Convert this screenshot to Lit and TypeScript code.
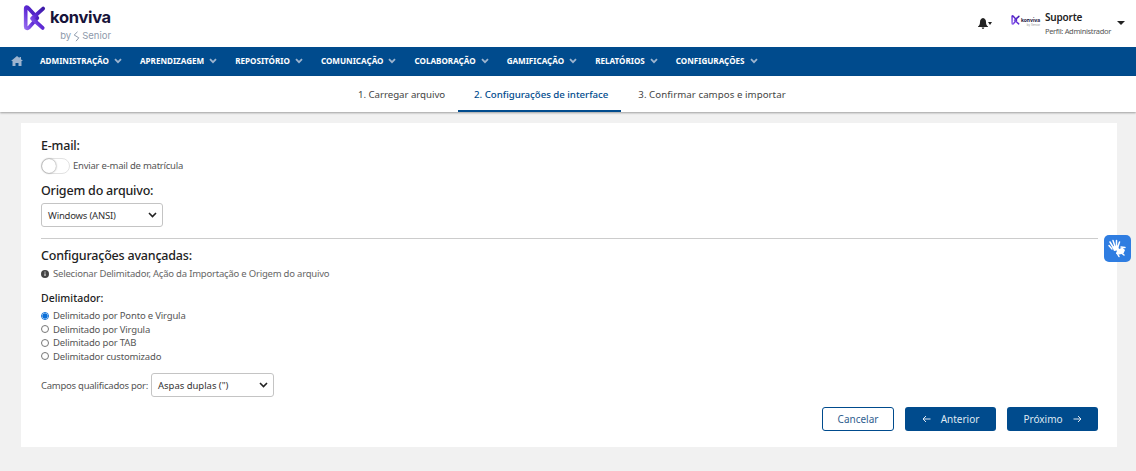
import { LitElement, html, css, svg } from "lit";
import { customElement } from "lit/decorators.js";

const chev = svg`<svg class="chev" width="8" height="6" viewBox="0 0 8 6"><path d="M1 1.200 4 4.200 7 1.200" fill="none" stroke="#9db4cf" stroke-width="1.800"/></svg>`;
const logoMark = (w: number, h: number, id: string) => html`<svg width=${w} height=${h} viewBox="0 0 24 26">
  <defs><linearGradient id=${id} x1="0" y1="1" x2="1" y2="0"><stop offset="0" stop-color="#9468ee"/><stop offset=".45" stop-color="#5f2bd6"/><stop offset="1" stop-color="#3d1aa8"/></linearGradient></defs>
  <path d="M2.800 3V21.800C2.800 24 4.800 24.400 6.200 23L15 13 6 3C4.500 1.300 2.800 1.300 2.800 3Z" fill="none" stroke=${`url(#${id})`} stroke-width="3.800" stroke-linejoin="round"/>
  <path d="M21 3.200 9.500 13.500 20.500 23.300" fill="none" stroke=${`url(#${id})`} stroke-width="4" stroke-linecap="round" stroke-linejoin="round"/></svg>`;

@customElement("app-root")
export class AppRoot extends LitElement {
  static styles = css`
    :host { display: block; width: 1136px; height: 471px; overflow: hidden; position: relative; background: #f1f1f1; font-family: "Noto Sans", "Open Sans", sans-serif; color: #333; }
    .top { height: 47px; background: #fff; display: flex; align-items: flex-start; justify-content: space-between; }
    .logo { margin: 5px 0 0 23px; display: grid; grid-template-columns: 23px auto; column-gap: 4px; width: 90px; }
    .logo .word { font: 700 16.500px/17px "Inter", sans-serif; color: #17133a; letter-spacing: -0.3px; margin-top: 4px; }
    .logo .by { grid-column: 1 / 3; justify-self: end; margin: -1px 2px 0 0; font: 400 9.500px/12px "Inter", sans-serif; color: #8e9aab; display: flex; align-items: center; gap: 2px; }
    .user { display: flex; align-items: flex-start; margin-right: 11px; }
    .bell { margin: 18px 0 0 0; display: flex; align-items: center; }
    .mini { margin: 15px 0 0 19px; width: 28px; display: grid; grid-template-columns: 9px auto; column-gap: 1px; align-items: center; }
    .mini b { font: 700 5px/6px "Inter", sans-serif; color: #17133a; }
    .mini i { grid-column: 1 / 3; justify-self: end; font: 400 3px/3px "Inter", sans-serif; color: #999; margin-top: -1px; }
    .who { margin: 11px 0 0 6px; width: 72px; }
    .who .n { font-size: 10px; font-weight: 600; line-height: 13px; color: #222; letter-spacing: -.2px; }
    .who .p { font-size: 7.500px; line-height: 11px; color: #555; margin-top: 2px; white-space: nowrap; letter-spacing: -.33px; }
    .caret { width: 0; height: 0; border: 4px solid transparent; border-top: 4px solid #222; border-bottom: 0; margin: 21px 0 0 0; }
    .bcaret { width: 0; height: 0; border: 2.500px solid transparent; border-top: 3px solid #222; border-bottom: 0; }
    nav { height: 29px; background: #004b8d; display: flex; align-items: center; padding: 0 0 2px 11px; box-sizing: border-box; }
    nav .home { margin-right: 17px; display: flex; }
    nav .m { display: flex; align-items: center; gap: 5px; margin-right: 18px; color: #fff; font-size: 8.100px; font-weight: 700; white-space: nowrap; }
    .tabs { height: 36px; background: #fff; display: flex; padding-left: 345px; box-shadow: 0 1px 2px rgba(0,0,0,.35); position: relative; box-sizing: border-box; }
    .tab { font-size: 9.700px; line-height: 37px; color: #444; letter-spacing: -.04px; box-sizing: border-box; white-space: nowrap; }
    .t1 { padding: 0 13px; }
    .t2 { padding: 0 13px 0 16px; color: #004b8d; font-weight: 500; border-bottom: 2px solid #004b8d; }
    .t3 { padding: 0 0 0 17px; letter-spacing: .05px; }
    .card { position: absolute; left: 21px; top: 123px; width: 1096px; height: 324px; background: #fff; box-sizing: border-box; padding: 14px 19px 0 20px; }
    h3 { margin: 0; font-size: 12.500px; font-weight: 500; line-height: 17px; color: #222; letter-spacing: -.2px; }
    .sw { display: flex; align-items: center; gap: 3px; margin-top: 3px; height: 17px; font-size: 9.500px; color: #555; letter-spacing: -.23px; }
    .switch { width: 29px; height: 16px; border: 1px solid #e2e2e2; border-radius: 9px; box-sizing: border-box; position: relative; background: #fff; }
    .switch::before { content: ""; position: absolute; left: 0; top: 0; width: 14px; height: 14px; border-radius: 50%; background: #fff; box-shadow: 0 0 2px rgba(0,0,0,.6); }
    .org { margin-top: 8px; }
    .sel { appearance: none; display: flex; align-items: center; justify-content: space-between; box-sizing: border-box; height: 24px; border: 1px solid #c4c4c4; border-radius: 3px; padding: 0 5px 0 6px; font-size: 9.500px; color: #333; background: #fff; }
    .s1 { width: 122px; margin-top: 4px; letter-spacing: -.2px; }
    hr { border: 0; border-top: 1px solid #ccc; margin: 11px 0 0; height: 0; }
    .adv { margin-top: 8px; }
    .info { display: flex; align-items: center; gap: 4px; margin-top: 3px; font-size: 9.500px; line-height: 14px; color: #666; letter-spacing: -.21px; }
    .del { margin-top: 10px; font-size: 10.500px; font-weight: 500; line-height: 14px; color: #222; }
    .radios { margin-top: 4px; display: flex; flex-direction: column; }
    .r { display: flex; align-items: center; gap: 4px; height: 13.500px; font-size: 9.500px; color: #555; letter-spacing: -.17px; }
    .dot { width: 8px; height: 8px; border: 1px solid #777; border-radius: 50%; box-sizing: border-box; background: #fff; }
    .dot.on { border: 1px solid #0a6fd8; background: radial-gradient(circle, #0a6fd8 0 2.400px, #fff 2.800px); }
    .q { display: flex; align-items: center; gap: 3px; margin-top: 10px; font-size: 9.500px; color: #555; letter-spacing: -.25px; }
    .s2 { width: 123px; letter-spacing: -.03px; }
    .actions { display: flex; justify-content: flex-end; gap: 11px; margin-top: 10px; }
    .btn { height: 24px; box-sizing: border-box; border-radius: 3px; display: flex; align-items: center; justify-content: center; font-size: 10px; }
    .c { width: 72px; border: 1px solid #004b8d; color: #31608f; background: #fff; }
    .a, .b { width: 91px; background: #004b8d; color: #dfe8f2; gap: 10px; }
    .vlib { position: absolute; right: 5px; top: 235px; width: 27px; height: 27px; border-radius: 5px; background: #2f7de1; display: flex; align-items: center; justify-content: center; }
  `;

  menu = ["ADMINISTRAÇÃO", "APRENDIZAGEM", "REPOSITÓRIO", "COMUNICAÇÃO", "COLABORAÇÃO", "GAMIFICAÇÃO", "RELATÓRIOS", "CONFIGURAÇÕES"];
  radios = ["Delimitado por Ponto e Virgula", "Delimitado por Virgula", "Delimitado por TAB", "Delimitador customizado"];

  selChev() {
    return html`<svg width="9" height="6" viewBox="0 0 9 6"><path d="M1 1 4.500 4.500 8 1" fill="none" stroke="#222" stroke-width="1.600"/></svg>`;
  }

  render() {
    return html`
      <div class="top">
        <div class="logo">
          ${logoMark(23, 26, "lg1")}
          <div class="word">konviva</div>
          <div class="by">by
            <svg width="7" height="11" viewBox="0 0 7 11"><path d="M4.500 .8 1.200 4 5.800 6.800 3 10.200" fill="none" stroke="#8e9aab" stroke-width="1"/></svg>
            Senior</div>
        </div>
        <div class="user">
          <div class="bell">
            <svg width="10" height="11" viewBox="0 0 10 11"><path d="M5 0C3 .5 2 2 2 4c0 2-.6 3.500-2 4.600V9h10v-.4C8.600 7.500 8 6 8 4c0-2-1-3.500-3-4ZM3.700 9.600a1.300 1.300 0 0 0 2.600 0Z" fill="#222"/></svg>
            <span class="bcaret"></span>
          </div>
          <div class="mini">${logoMark(9, 10, "lg2")}<b>konviva</b><i>by Senior</i></div>
          <div class="who"><div class="n">Suporte</div><div class="p">Perfil: Administrador</div></div>
          <span class="caret"></span>
        </div>
      </div>
      <nav>
        <span class="home"><svg width="12" height="10" viewBox="0 0 12 10"><path d="M6 0 0 5h1.500v5h3V7h3v3h3V5H12L10 3.300V1H8.500v1Z" fill="#9db4cf"/></svg></span>
        ${this.menu.map((m) => html`<span class="m">${m}${chev}</span>`)}
      </nav>
      <div class="tabs">
        <div class="tab t1">1. Carregar arquivo</div>
        <div class="tab t2">2. Configurações de interface</div>
        <div class="tab t3">3. Confirmar campos e importar</div>
      </div>
      <div class="card">
        <h3>E-mail:</h3>
        <div class="sw"><span class="switch"></span>Enviar e-mail de matrícula</div>
        <h3 class="org">Origem do arquivo:</h3>
        <div class="sel s1"><span>Windows (ANSI)</span>${this.selChev()}</div>
        <hr />
        <h3 class="adv">Configurações avançadas:</h3>
        <div class="info">
          <svg width="8" height="8" viewBox="0 0 8 8"><circle cx="4" cy="4" r="4" fill="#444"/><path d="M4 3.400V6M4 1.600v1" stroke="#fff" stroke-width="1"/></svg>
          Selecionar Delimitador, Ação da Importação e Origem do arquivo
        </div>
        <div class="del">Delimitador:</div>
        <div class="radios">
          ${this.radios.map((r, i) => html`<div class="r"><span class="dot ${i === 0 ? "on" : ""}"></span>${r}</div>`)}
        </div>
        <div class="q">Campos qualificados por:<div class="sel s2"><span>Aspas duplas (")</span>${this.selChev()}</div></div>
        <div class="actions">
          <div class="btn c">Cancelar</div>
          <div class="btn a"><svg width="9" height="8" viewBox="0 0 9 8"><path d="M8.500 4H1M4 1 1 4l3 3" fill="none" stroke="#dfe8f2" stroke-width="1"/></svg><span>Anterior</span></div>
          <div class="btn b"><span>Próximo</span><svg width="9" height="8" viewBox="0 0 9 8"><path d="M.5 4H8M5 1l3 3-3 3" fill="none" stroke="#dfe8f2" stroke-width="1"/></svg></div>
        </div>
      </div>
      <div class="vlib">
        <svg width="21" height="21" viewBox="0 0 21 21">
          <g fill="none" stroke="#fff" stroke-linecap="round" stroke-width="1.500">
            <path d="M3 4 6 9M6 2.500 7.800 8M9.500 2.500 9.500 8M12.500 4 11 8.500M2 7.500 5 11"/>
            <path d="M14 9 18 9.500M13 14 17 17M10 15 12 18.500"/>
          </g>
          <path d="M5 8.500 11 7.500 12 11 15.500 9.500 18 12 16.500 15.500 12.500 16.500 9 16 10 12.500 7 13Z" fill="#fff"/>
        </svg>
      </div>
    `;
  }
}
